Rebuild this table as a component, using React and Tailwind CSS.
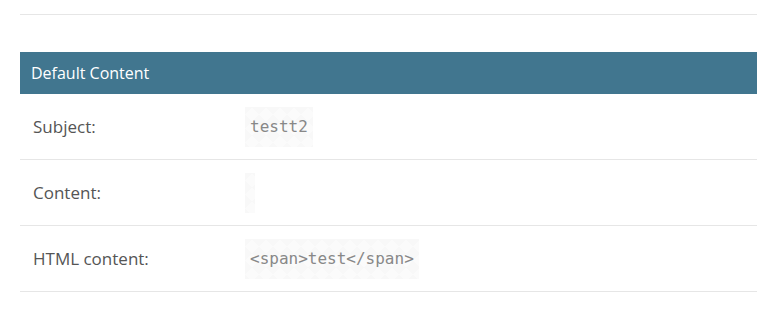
const ROWS = [
  { label: 'Subject:', value: 'testt2' },
  { label: 'Content:', value: '' },
  { label: 'HTML content:', value: '<span>test</span>' },
]

// faint diagonal hatch used behind the <pre> values
const hatch =
  'bg-[#fbfbfb] bg-[linear-gradient(45deg,rgba(0,0,0,0.012)_25%,transparent_25%,transparent_75%,rgba(0,0,0,0.012)_75%),linear-gradient(-45deg,rgba(0,0,0,0.012)_25%,transparent_25%,transparent_75%,rgba(0,0,0,0.012)_75%)] bg-[length:14px_14px]'

function DetailRow({ label, value }) {
  return (
    <div className="flex items-center border-b border-[#e6e6e6] h-[66px]">
      <div className="w-[225px] pl-[13px] text-[17px] text-[#555] shrink-0">{label}</div>
      <pre
        className={`${hatch} px-[5px] py-2 font-['DejaVu_Sans_Mono',monospace] text-[16px] leading-6 text-[#888] h-10 min-w-[10px]`}
      >
        {value}
      </pre>
    </div>
  )
}

export default function App() {
  return (
    <div className="bg-white w-[772px] h-[326px] pl-5 pr-[15px] pt-[14px] font-['Open_Sans',sans-serif]">
      <div className="border-t border-[#e6e6e6]" />
      <div className="mt-[37px]">
        <div className="bg-[#41768f] h-[42px] flex items-center px-[11px] text-[16px] text-white">
          Default Content
        </div>
        {ROWS.map(r => (
          <DetailRow key={r.label} label={r.label} value={r.value} />
        ))}
      </div>
    </div>
  )
}
